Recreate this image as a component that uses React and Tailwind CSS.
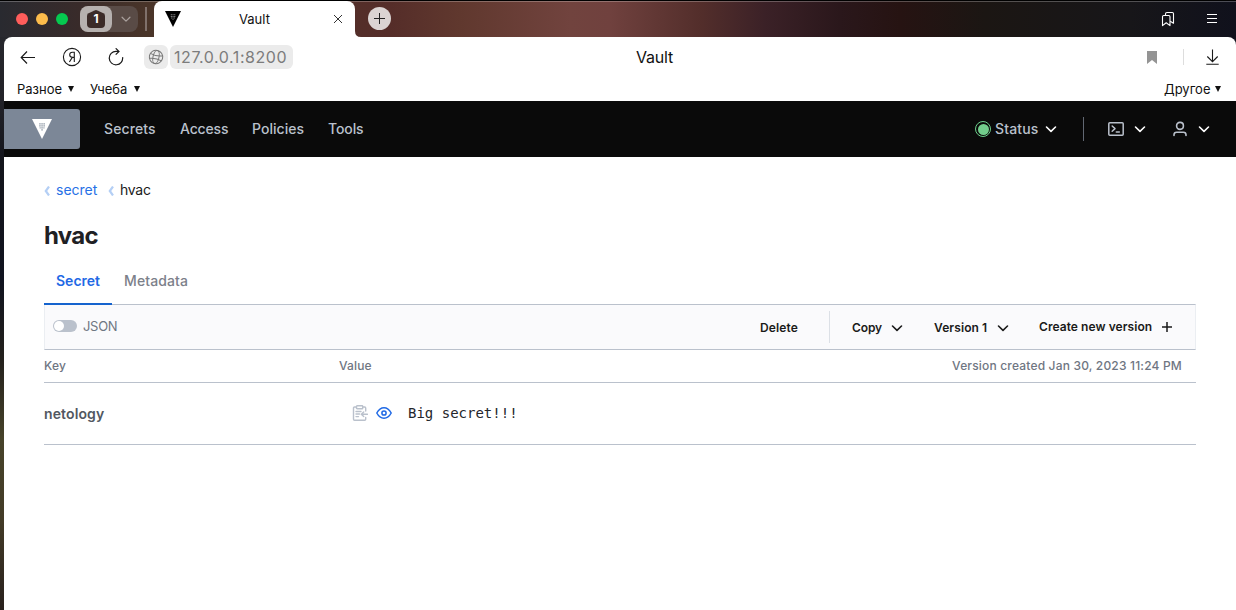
import React from "react";

function Chevron({ className = "", size = 16, w = 1.6 }) {
  return (
    <svg width={size} height={size} viewBox="0 0 16 16" fill="none" stroke="currentColor" strokeWidth={w} strokeLinecap="round" strokeLinejoin="round" className={"shrink-0 " + className}>
      <path d="M3.5 6 8 10.4 12.5 6" />
    </svg>
  );
}

function VaultMark({ className, dot }) {
  return (
    <svg viewBox="0 0 20 20" className={"shrink-0 " + className}>
      <path d="M0 0H20L10 20Z" fill="currentColor" />
      <g fill={dot}>
        <path d="M7.2 4.2h1.5v1.2H7.2zM9.3 4.2h1.5v1.2H9.3zM11.4 4.2h1.5v1.2h-1.5zM7.2 6.2h1.5v1.2H7.2zM9.3 6.2h1.5v1.2H9.3zM11.4 6.2h1.5v1.2h-1.5zM7.6 8.2h1.1v1.2H7.6zM9.3 8.2h1.5v1.2H9.3zM11.4 8.2h1.1v1.2h-1.1zM9.3 10.2h1.5v1.2H9.3z" />
      </g>
    </svg>
  );
}

function TitleBar() {
  return (
    <header className="flex h-[37px] shrink-0 border-t border-black bg-[linear-gradient(90deg,#292a30_0,#392b2a_80px,#4a3529_150px,#552d29_390px,#60382e_460px,#71433e_570px,#70413e_610px,#532e2b_700px,#3b2127_765px,#2a171b_840px,#261312_900px,#1b1613_985px,#171619_1130px,#10111c_1236px)] shadow-[inset_0_1px_0_rgba(255,255,255,0.25)]">
      <div className="flex h-9 w-[154px] items-center">
        <div className="ml-4 flex gap-2">
          <span className="size-3 rounded-full bg-[#ff5d5b]" />
          <span className="size-3 rounded-full bg-[#fdbc4b]" />
          <span className="size-3 rounded-full bg-[#05c950]" />
        </div>
        <div className="ml-3 flex h-[26px] w-[58px] items-center rounded-[8px] bg-[#594b46]">
          <div className="grid h-[26px] w-8 place-items-center rounded-[8px] bg-[#b6b1af]">
            <svg width="18" height="18" viewBox="0 0 18 18" className="col-start-1 row-start-1">
              <path d="M7.6 .4Q9 -.2 10.4 .4L16.4 3.2Q18 4 18 6V14Q18 18 14 18H4Q0 18 0 14V6Q0 4 1.6 3.2Z" fill="#3b2b28" />
            </svg>
            <span className="z-10 col-start-1 row-start-1 text-[12px] font-bold leading-none text-white">1</span>
          </div>
          <Chevron size={14} className="ml-[7px] text-[#aaa19e]" w={1.4} />
        </div>
        <span className="ml-[7px] h-6 w-[2px] bg-[#80716b]" />
      </div>
      <div className="flex h-9 w-[201px] items-center rounded-t-[8px] bg-white">
        <VaultMark className="ml-[11px] h-4 w-4 text-black" dot="#808080" />
        <span className="ml-[58px] w-[32px] text-[13px] leading-4 text-[#111]">Vault</span>
        <svg width="10" height="10" viewBox="0 0 10 10" stroke="#333" strokeWidth="1" className="ml-[62px]"><path d="M1 1 9 9M9 1 1 9" /></svg>
      </div>
      <svg width="6" height="6" viewBox="0 0 6 6" className="self-end"><path d="M0 0Q0 6 6 6H0Z" fill="#fff" /></svg>
      <span className="ml-[7px] mt-[6px] flex size-[23px] items-center justify-center rounded-full bg-[#dbd4d3]">
        <svg width="11" height="11" viewBox="0 0 11 11" stroke="#222" strokeWidth="1"><path d="M0 5.5h11M5.5 0v11" /></svg>
      </span>
      <div className="ml-auto flex h-9 items-center text-white">
        <svg width="14" height="16" viewBox="0 0 14 16" fill="none" stroke="currentColor" strokeWidth="1.1" strokeLinejoin="round">
          <path d="M1.5 5.7Q1.5 4.5 2.7 4.5H7.8Q9 4.5 9 5.7V14.6L5.2 11.8 1.5 14.6Z" />
          <path d="M4.5 4.3V3Q4.5 1.5 6 1.5H11.3Q12.5 1.5 12.5 2.7V12.2L9.2 10.2" />
        </svg>
        <svg width="12" height="12" viewBox="0 0 12 12" stroke="currentColor" strokeWidth="1" className="mr-[18px] ml-[31px]"><path d="M1 1.5h10M1 5.5h10M1 9.5h10" /></svg>
      </div>
    </header>
  );
}

function AddressBar() {
  return (
    <div className="flex h-10 items-center text-[#1a1a1a]">
      <svg width="16" height="14" viewBox="0 0 16 14" fill="none" stroke="currentColor" strokeWidth="1.2" className="ml-4"><path d="M15 7.5H1.5M7 1.5 1.2 7.5 7 13.5" /></svg>
      <svg width="20" height="20" viewBox="0 0 20 20" fill="none" stroke="currentColor" strokeWidth="1.1" className="ml-[26px]">
        <circle cx="10" cy="10" r="8.6" />
        <path d="M12.3 15V5.2H10.4C8.7 5.2 7.7 6.3 7.7 7.8 7.7 9.5 8.9 10.4 10.6 10.4H12.2M10.3 10.4 7.4 15" />
      </svg>
      <svg width="18" height="18" viewBox="0 0 18 18" fill="none" stroke="currentColor" strokeWidth="1.2" className="ml-[25px]">
        <path d="M15.6 9.2A6.7 6.7 0 1 1 9 3.4H12M8.7 .3 12 3.4 8.7 6.6" />
      </svg>
      <div className="ml-[19px] flex h-6 w-6 items-center justify-center rounded-[6px] bg-[#ebebeb] text-[#777]">
        <svg width="16" height="16" viewBox="0 0 16 16" fill="none" stroke="currentColor" strokeWidth="1">
          <g transform="rotate(12 8 8)"><circle cx="8" cy="8" r="6.7" /><ellipse cx="8" cy="8" rx="3" ry="6.7" /><path d="M1.8 5.6Q8 7.8 14.2 5.6M1.8 10.7Q8 8.5 14.2 10.7" /></g>
        </svg>
      </div>
      <div className="ml-[2px] flex h-6 w-[123px] items-center rounded-[6px] bg-[#ebebeb] pl-1 text-[16px] tracking-[0.56px] text-[#7c7c7c]">127.0.0.1:8200</div>
      <span className="ml-[343px] text-[16px] tracking-[-0.2px] text-[#111]">Vault</span>
      <div className="ml-auto flex items-center">
        <svg width="10" height="13" viewBox="0 0 10 13" className="text-[#949494]"><path d="M0 0H10V13L5 9 0 13Z" fill="currentColor" /></svg>
        <span className="ml-[26px] h-4 w-px bg-[#ddd]" />
        <svg width="14" height="16" viewBox="0 0 14 16" fill="none" stroke="currentColor" strokeWidth="1.1" className="mr-[17px] ml-[21px]"><path d="M7.5 .5V12.5M2.3 7.5 7.5 12.7 12.7 7.5M1.3 15.2H13.7" /></svg>
      </div>
    </div>
  );
}

function Folder({ children, className }) {
  return (
    <div className={"flex items-center justify-between " + className}>
      <span className="pt-[2px]">{children}</span>
      <svg width="6" height="6" viewBox="0 0 6 6"><path d="M0 0H6L3 6Z" fill="currentColor" /></svg>
    </div>
  );
}

function VaultNav() {
  return (
    <nav className="flex h-14 items-center bg-[#0a0a0a] text-[14px] font-medium text-[#bac1cc]">
      <div className="flex h-10 w-[76px] items-center justify-center rounded-r-[3px] bg-[#7c8797]">
        <VaultMark className="h-5 w-5 text-white" dot="#8f99a6" />
      </div>
      <div className="-mt-[2px] flex pl-6 tracking-[0.03px]">
        <span className="w-[76px] tracking-[0.12px]">Secrets</span>
        <span className="w-[72px] tracking-[-0.15px]">Access</span>
        <span className="w-[76px]">Policies</span>
        <span className="tracking-[-0.1px]">Tools</span>
      </div>
      <div className="ml-auto flex items-center">
        <span className="flex size-4 items-center justify-center rounded-full border-[1.5px] border-[#6ccf8b]"><span className="size-[11px] rounded-full bg-[#72ce8c]" /></span>
        <span className="-mt-[2px] ml-1 w-[48px] tracking-[0.15px]">Status</span>
        <Chevron className="text-white" w={1.6} />
        <span className="ml-[24px] h-6 w-px bg-[#626873]" />
        <svg width="16" height="16" viewBox="0 0 16 16" fill="none" stroke="currentColor" strokeWidth="1.5" strokeLinejoin="round" strokeLinecap="round" className="ml-6"><rect x=".8" y="1.8" width="14.4" height="12.4" rx="1" /><path d="M4.2 5 7 7.6 4.2 10.2M8.3 11H11.3" /></svg>
        <Chevron className="ml-2 text-white" w={1.6} />
        <svg width="16" height="16" viewBox="0 0 16 16" fill="none" stroke="currentColor" strokeWidth="1.6" strokeLinecap="round" className="ml-6"><rect x="4.6" y="1.4" width="6.8" height="7" rx="3.3" /><path d="M2 14.5V13.8Q2 11.2 4.6 11.2H11.4Q14 11.2 14 13.8V14.5" /></svg>
        <Chevron className="mr-6 ml-2 text-white" w={1.6} />
      </div>
    </nav>
  );
}

function BackMark({ className = "" }) {
  return <svg width="6" height="10" viewBox="0 0 6 10" fill="none" stroke="#b4cff5" strokeWidth="2.2" className={className}><path d="M5 .5 1.8 5 5 9.5" /></svg>;
}

function SecretPage() {
  return (
    <main className="px-10">
      <div className="mt-[22px] flex h-5 items-center text-[14px]">
        <BackMark className="mt-[3px]" />
        <a className="ml-[6px] w-[41px] text-[#2871e6]">secret</a>
        <BackMark className="mt-[3px] ml-[11px]" />
        <span className="ml-[6px] tracking-[-0.25px] text-[#1b1b1b]">hvac</span>
      </div>
      <h1 className="mt-[21px] h-8 text-[24px] font-bold leading-8 tracking-[-0.7px] text-[#1f2124]">hvac</h1>
      <div className="mt-[9px] flex h-[44px] text-[14px] font-medium leading-5 text-[#7c808a]">
        <div className="z-10 h-[44px] w-[68px] border-b-2 border-[#1563ce] pt-[10px] pl-3 font-semibold text-[#1f69e5]">Secret</div>
        <div className="pt-[10px] pl-3 tracking-[0.12px]">Metadata</div>
      </div>
      <div className="-mt-px flex h-[46px] items-center border border-x-[#ebeef2] border-y-[#bac1cc] bg-[#fafafc] text-[12px] font-semibold text-[#1a1a1a]">
        <div className="-mt-[2px] ml-2 flex h-3 w-6 items-center rounded-full bg-[#bac1cc] pl-px"><span className="size-[10px] rounded-full bg-white" /></div>
        <span className="-mt-px ml-[6px] text-[13px] font-normal tracking-[-0.3px] text-[#6f7682]">JSON</span>
        <div className="ml-auto flex items-center">
          <span className="mt-[2px] w-[69px] tracking-[0.15px]">Delete</span>
          <span className="h-8 w-px bg-[#dce0e6]" />
          <span className="mt-[2px] ml-[22px] w-[37px] tracking-[-0.1px]">Copy</span>
          <Chevron w={1.6} className="mt-[2px]" />
          <span className="mt-[2px] ml-[29px] w-[61px] tracking-[0.1px]">Version 1</span>
          <Chevron w={1.6} className="mt-[2px]" />
          <span className="ml-[28px] w-[121px] tracking-[0.06px]">Create new version</span>
          <svg width="10" height="10" viewBox="0 0 10 10" stroke="currentColor" strokeWidth="1.5" className="mr-[23px] ml-[2px]"><path d="M0 5h10M5 0v10" /></svg>
        </div>
      </div>
      <div className="flex h-[33px] items-center border-b border-[#bac1cc] text-[12px] font-medium text-[#6f7682]">
        <span className="w-[295px] tracking-[0.15px]">Key</span>
        <span className="tracking-[0.15px]">Value</span>
        <span className="mr-[14px] ml-auto tracking-[0.18px]">Version created Jan 30, 2023 11:24 PM</span>
      </div>
      <div className="flex h-[62px] items-center border-b border-[#bac1cc]">
        <span className="w-[308px] text-[14px] font-semibold tracking-[0.12px] text-[#525761]">netology</span>
        <svg width="16" height="16" viewBox="0 0 16 16" fill="none" stroke="#bac1cc" strokeWidth="1.4" strokeLinejoin="round" strokeLinecap="round" className="-mt-[2px]">
          <path d="M4.5 2H2.5Q1.5 2 1.5 3V14.2Q1.5 15.2 2.5 15.2H12.7Q13.7 15.2 13.7 14.2V12.5M10.7 2H12.7Q13.7 2 13.7 3V6" /><rect x="4.5" y=".8" width="6.2" height="3" rx=".6" /><path d="M4 6.5H9M4 9H7.5M4 11.6H6.5M15.4 9.3H9.5M11.7 7 9.3 9.3 11.7 11.6" />
        </svg>
        <svg width="16" height="16" viewBox="0 0 16 16" fill="none" stroke="#1f69e5" strokeWidth="1.5" className="-mt-[2px] ml-2"><path d="M.8 8Q3.6 2.8 8 2.8T15.2 8Q12.4 13.2 8 13.2T.8 8Z" strokeLinejoin="round" /><circle cx="8" cy="8" r="2.1" /></svg>
        <span className="ml-4 font-['DejaVu_Sans_Mono',monospace] text-[14px] text-[#24262b]">Big secret!!!</span>
      </div>
    </main>
  );
}

export default function App() {
  return (
    <div className="flex h-[610px] w-[1236px] flex-col overflow-hidden bg-[linear-gradient(180deg,#292a30_0,#222228_100px,#14151c_160px,#10131f_280px,#24211d_360px,#47432a_440px,#433b27_520px,#28201d_610px)] font-['Inter',sans-serif]">
      <TitleBar />
      <div className="flex grow bg-[linear-gradient(90deg,transparent_50%,#10111c_50%)]">
        <div className="ml-1 grow rounded-t-[8px] bg-white">
          <AddressBar />
          <div className="flex h-6 items-center pl-[13px] text-[13px] text-[#111]">
            <Folder className="w-[57px]">Разное</Folder>
            <Folder className="ml-4 w-[50px]">Учеба</Folder>
            <Folder className="mr-[15px] ml-auto w-[57px]">Другое</Folder>
          </div>
          <VaultNav />
          <SecretPage />
        </div>
      </div>
    </div>
  );
}
